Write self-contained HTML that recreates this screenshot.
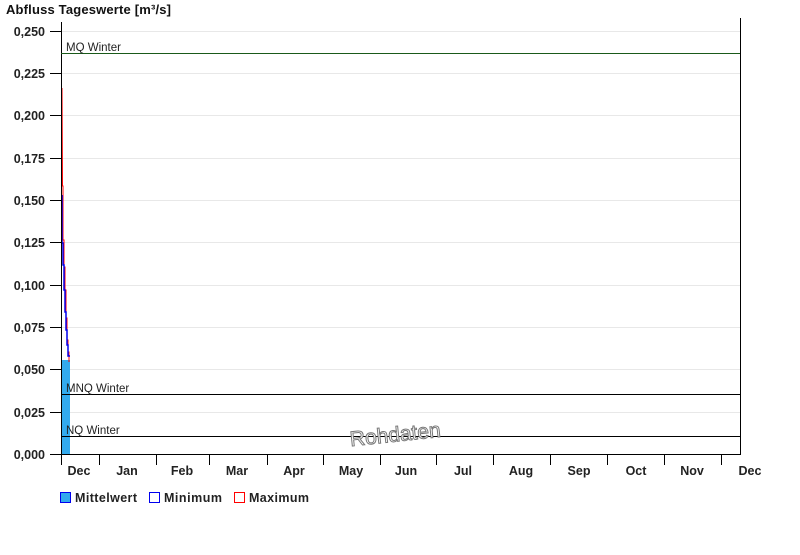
<!DOCTYPE html>
<html><head><meta charset="utf-8"><style>
body{margin:0;background:#fff;width:800px;height:550px;overflow:hidden;font-family:"Liberation Sans",Arial,sans-serif}
</style></head><body>
<svg width="800" height="550" xmlns="http://www.w3.org/2000/svg" font-family="Liberation Sans, Arial, sans-serif">
<text x="6" y="14" font-size="13" font-weight="bold" fill="#111" textLength="165">Abfluss Tageswerte [m³/s]</text>
<g stroke="#e8e8e8" stroke-width="1">
<line x1="62" x2="740" y1="31.5" y2="31.5"/><line x1="62" x2="740" y1="73.5" y2="73.5"/><line x1="62" x2="740" y1="115.5" y2="115.5"/><line x1="62" x2="740" y1="158.5" y2="158.5"/><line x1="62" x2="740" y1="200.5" y2="200.5"/><line x1="62" x2="740" y1="242.5" y2="242.5"/><line x1="62" x2="740" y1="285.5" y2="285.5"/><line x1="62" x2="740" y1="327.5" y2="327.5"/><line x1="62" x2="740" y1="369.5" y2="369.5"/><line x1="62" x2="740" y1="412.5" y2="412.5"/>
</g>
<g font-size="12.5" font-weight="bold" fill="#222" text-anchor="end">
<text x="45" y="36">0,250</text><text x="45" y="78">0,225</text><text x="45" y="120">0,200</text><text x="45" y="163">0,175</text><text x="45" y="205">0,150</text><text x="45" y="247">0,125</text><text x="45" y="290">0,100</text><text x="45" y="332">0,075</text><text x="45" y="374">0,050</text><text x="45" y="417">0,025</text><text x="45" y="459">0,000</text>
</g>
<g stroke="#000" stroke-width="1">
<line x1="50" x2="61" y1="31.5" y2="31.5"/><line x1="50" x2="61" y1="73.5" y2="73.5"/><line x1="50" x2="61" y1="115.5" y2="115.5"/><line x1="50" x2="61" y1="158.5" y2="158.5"/><line x1="50" x2="61" y1="200.5" y2="200.5"/><line x1="50" x2="61" y1="242.5" y2="242.5"/><line x1="50" x2="61" y1="285.5" y2="285.5"/><line x1="50" x2="61" y1="327.5" y2="327.5"/><line x1="50" x2="61" y1="369.5" y2="369.5"/><line x1="50" x2="61" y1="412.5" y2="412.5"/><line x1="50" x2="61" y1="454.5" y2="454.5"/>
</g>
<rect x="61" y="360" width="9" height="94" fill="#33aaee"/>
<polyline fill="none" stroke="#ff0000" stroke-width="1" points="62,88 62.5,186 63,186 63,240 64,240 64,267 65,267 65,290 66,290 66,318 67,318 67,340 68,340 68,352 69,352 69,362"/>
<polyline fill="none" stroke="#0000ee" stroke-width="1.5" points="62,195 62,243 63,243 63,265 64,265 64,290 65,290 65,312 66,312 66,330 67,330 67,345 68,345 68,356 70,356"/>
<line x1="61.5" y1="22" x2="61.5" y2="465" stroke="#000" stroke-width="1"/>
<line x1="740.5" y1="18" x2="740.5" y2="454" stroke="#000" stroke-width="1"/>
<line x1="61" x2="741" y1="454.5" y2="454.5" stroke="#000"/>
<line x1="61" x2="740" y1="53.5" y2="53.5" stroke="#1a5a1a"/>
<line x1="61" x2="740" y1="394.5" y2="394.5" stroke="#000"/>
<line x1="61" x2="740" y1="436.5" y2="436.5" stroke="#000"/>
<g font-size="11.5" fill="#222">
<text x="66" y="51">MQ Winter</text><text x="66" y="392">MNQ Winter</text><text x="66" y="434">NQ Winter</text>
</g>
<text x="349" y="441" font-size="21" fill="#fff" stroke="#777" stroke-width="1" transform="rotate(-6 400 428)">Rohdaten</text>
<g stroke="#000">
<line x1="61.5" x2="61.5" y1="454" y2="465"/><line x1="99.5" x2="99.5" y1="454" y2="465"/><line x1="156.5" x2="156.5" y1="454" y2="465"/><line x1="209.5" x2="209.5" y1="454" y2="465"/><line x1="267.5" x2="267.5" y1="454" y2="465"/><line x1="323.5" x2="323.5" y1="454" y2="465"/><line x1="380.5" x2="380.5" y1="454" y2="465"/><line x1="436.5" x2="436.5" y1="454" y2="465"/><line x1="493.5" x2="493.5" y1="454" y2="465"/><line x1="550.5" x2="550.5" y1="454" y2="465"/><line x1="607.5" x2="607.5" y1="454" y2="465"/><line x1="664.5" x2="664.5" y1="454" y2="465"/><line x1="721.5" x2="721.5" y1="454" y2="465"/>
</g>
<g font-size="12.5" font-weight="bold" fill="#222" text-anchor="middle">
<text x="79" y="475">Dec</text><text x="127" y="475">Jan</text><text x="182" y="475">Feb</text><text x="237" y="475">Mar</text><text x="294" y="475">Apr</text><text x="351" y="475">May</text><text x="406" y="475">Jun</text><text x="463" y="475">Jul</text><text x="521" y="475">Aug</text><text x="579" y="475">Sep</text><text x="636" y="475">Oct</text><text x="692" y="475">Nov</text><text x="750" y="475">Dec</text>
</g>
<rect x="60.5" y="492.5" width="10" height="10" fill="#33aaee" stroke="#0000ee"/>
<rect x="149.5" y="492.5" width="10" height="10" fill="#fff" stroke="#0000ee"/>
<rect x="234.5" y="492.5" width="10" height="10" fill="#fff" stroke="#ff0000"/>
<g font-size="12.5" font-weight="bold" fill="#222">
<text x="75" y="502" textLength="62">Mittelwert</text><text x="164" y="502" textLength="58">Minimum</text><text x="249" y="502" textLength="60">Maximum</text>
</g>
</svg>
</body></html>
